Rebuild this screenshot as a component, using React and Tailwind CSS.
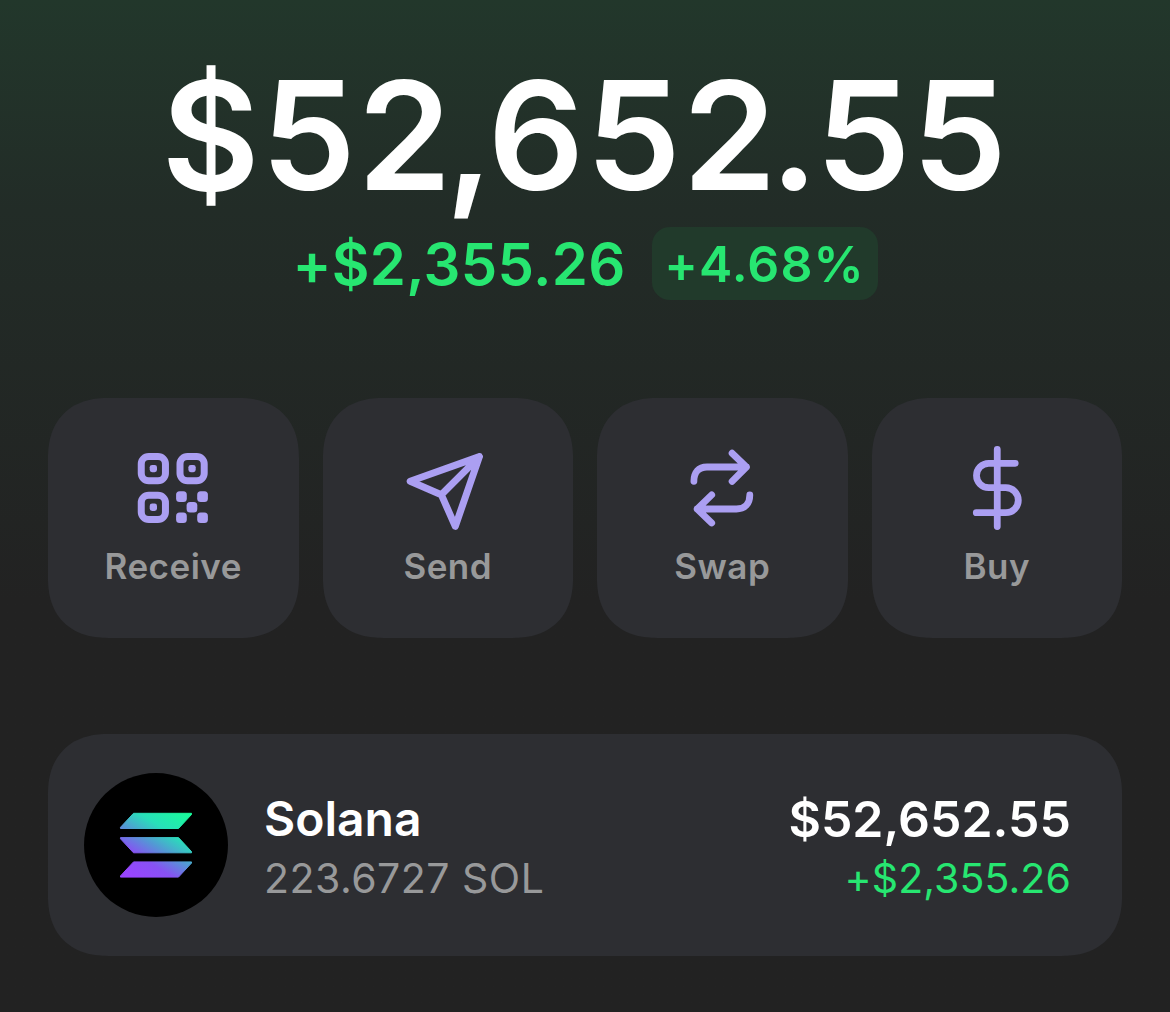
import React from "react";

const ReceiveIcon = () => (
  <svg viewBox="0 0 90 90" className="size-[90px]" fill="#ab9ff2">
    <g fill="none" stroke="#ab9ff2" strokeWidth="7">
      <rect x="13.25" y="13.5" width="24.2" height="24.2" rx="7.5" />
      <rect x="52" y="13.5" width="24.2" height="24.2" rx="7.5" />
      <rect x="13.25" y="52.2" width="24.2" height="24.2" rx="7.5" />
    </g>
    <rect x="21.7" y="21.9" width="7.3" height="7.3" rx="2.4" />
    <rect x="60.4" y="21.9" width="7.3" height="7.3" rx="2.4" />
    <rect x="21.7" y="60.6" width="7.3" height="7.3" rx="2.4" />
    <rect x="48.1" y="48.3" width="10.7" height="10.7" rx="3.5" />
    <rect x="69.2" y="48.3" width="10.7" height="10.7" rx="3.5" />
    <rect x="58.6" y="58.9" width="10.7" height="10.7" rx="3.5" />
    <rect x="48.1" y="69.4" width="10.7" height="10.7" rx="3.5" />
    <rect x="69.2" y="69.4" width="10.7" height="10.7" rx="3.5" />
  </svg>
);

const StrokeIcon = ({ d, width }) => (
  <svg
    viewBox="0 0 90 90"
    className="size-[90px]"
    fill="none"
    stroke="#ab9ff2"
    strokeWidth={width}
    strokeLinecap="round"
    strokeLinejoin="round"
  >
    <path d={d} />
  </svg>
);

const SolanaLogo = () => (
  <svg viewBox="0 0 144 144" className="size-36 rounded-full bg-black">
    <defs>
      <linearGradient
        id="solana"
        gradientUnits="userSpaceOnUse"
        x1="48"
        y1="111"
        x2="96"
        y2="33"
      >
        <stop offset="0.08" stopColor="#9945ff" />
        <stop offset="0.3" stopColor="#8752f3" />
        <stop offset="0.49" stopColor="#5497d5" />
        <stop offset="0.57" stopColor="#43b4ca" />
        <stop offset="0.7" stopColor="#28e0b9" />
        <stop offset="0.97" stopColor="#19fb9b" />
      </linearGradient>
    </defs>
    <g fill="url(#solana)" stroke="url(#solana)" strokeLinejoin="round">
      <path d="M49.5 40.3H107.5V41.5L94.5 55.5H36.5V54.3Z" />
      <path d="M49.5 79.8H107.5V78.6L94.5 64.6H36.5V65.8Z" />
      <path d="M49.5 88.9H107.5V90.1L94.5 104.1H36.5V102.9Z" />
    </g>
  </svg>
);

const actions = [
  { label: "Receive", icon: <ReceiveIcon /> },
  {
    label: "Send",
    icon: (
      <StrokeIcon
        width={7}
        d="M7.2 38.2L76.4 13.6L52.3 83.3L38.3 51.7ZM38.3 51.7L76.4 13.6"
      />
    ),
  },
  {
    label: "Swap",
    icon: (
      <StrokeIcon
        width={6.8}
        d="M16.9 38.3C16.9 29.5 21.5 24 30 24H69.4M55.1 10.2L69.4 24L55.1 38.3M72.8 51.9C72.8 60.5 68 66 59.4 66H20.2M34.7 51.9L20.2 66L34.7 80"
      />
    ),
  },
  {
    label: "Buy",
    icon: (
      <StrokeIcon
        width={6.8}
        d="M45.25 6.4V83.6M63.2 20.3H36.7a12.2 12.2 0 0 0 0 24.4H53.8a12.5 12.5 0 0 1 0 25H24.3"
      />
    ),
  },
];

const App = () => {
  return (
    <div className="flex h-[1012px] w-[1170px] flex-col bg-[#222222] bg-linear-to-b from-[#22372b] via-[#222c27] via-[210px] to-[#222222] to-[600px] px-12 pt-[59px] font-['Inter',sans-serif]">
      <div className="text-center text-[151px] leading-[152px] font-semibold tracking-[1.5px] text-white">
        $5<span className="tracking-[-6.5px]">2</span>
        <span className="tracking-[-5.5px]">,</span>65
        <span className="tracking-[-6.5px]">2</span>
        <span className="tracking-[-2.5px]">.</span>55
      </div>
      <div className="mt-4 flex h-[73px] items-center justify-center gap-[26px] text-[#27e671]">
        <span className="text-[58px] leading-[74px] font-semibold tracking-[0.3px]">
          +$2,355.26
        </span>
        <span className="flex h-[73px] w-[226px] items-center justify-center rounded-[18px] bg-[#213a2b] pt-px text-[50px] font-semibold tracking-[1.1px]">
          +4.68%
        </span>
      </div>

      <div className="mt-[98px] grid grid-cols-4 gap-6">
        {actions.map((action) => (
          <div
            key={action.label}
            className="flex h-[240px] flex-col items-center rounded-[60px] bg-[#2d2e32] pt-[45px] [corner-shape:superellipse(1.2)]"
          >
            {action.icon}
            <span className="mt-[13px] text-[35px] leading-10 font-semibold tracking-[0.5px] text-[#98999a]">
              {action.label}
            </span>
          </div>
        ))}
      </div>

      <div className="mt-[96px] flex h-[222px] items-center rounded-[60px] bg-[#2d2e32] pr-[51px] pl-9 [corner-shape:superellipse(1.2)]">
        <SolanaLogo />
        <div className="ml-9 flex flex-col pt-1.5">
          <span className="text-[48px] leading-[60px] font-semibold text-white">
            Solana
          </span>
          <span className="text-[41px] leading-[58px] tracking-[0.5px] text-[#98999a]">
            223.6727 SOL
          </span>
        </div>
        <div className="ml-auto flex flex-col pt-1.5 text-right">
          <span className="text-[50px] leading-[60px] font-semibold text-white">
            $52,652.55
          </span>
          <span className="text-[41px] leading-[58px] tracking-[0.1px] text-[#27e671]">
            +$2,355.26
          </span>
        </div>
      </div>
    </div>
  );
};

export default App;
